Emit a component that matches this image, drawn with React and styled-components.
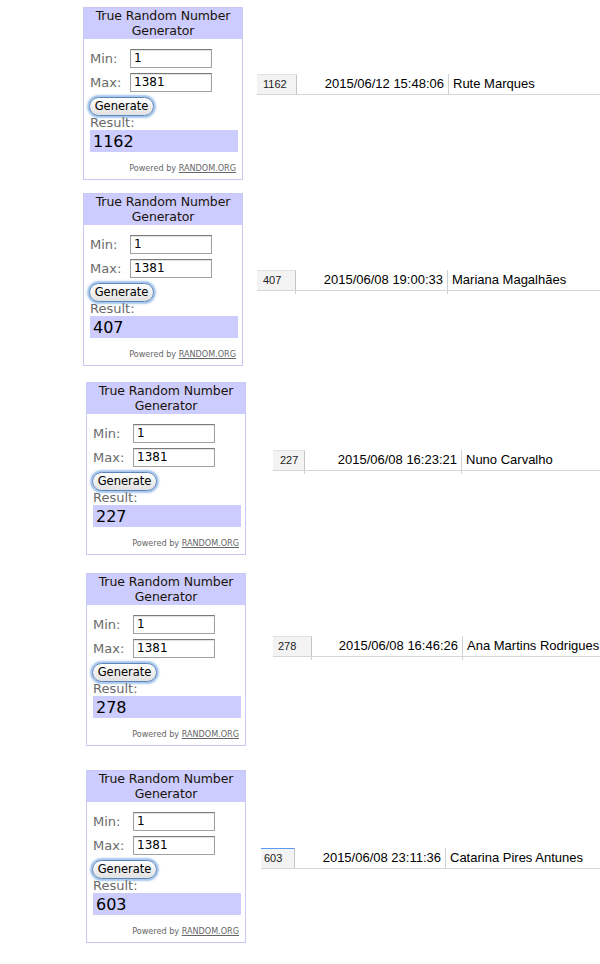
import React from "react"
import styled, { createGlobalStyle } from "styled-components"

const GlobalStyle = createGlobalStyle`
  body {
    margin: 0;
    background: #fff;
  }
`

const Page = styled.div`
  width: 600px;
  height: 964px;
  overflow: hidden;
  display: flex;
  flex-direction: column;
`

const Entry = styled.div`
  display: flex;
  align-items: flex-start;
  margin-top: ${p => p.top}px;
  padding-left: ${p => p.left}px;
`

// the random.org widget
const Widget = styled.div`
  width: 160px;
  height: 173px;
  box-sizing: border-box;
  overflow: hidden;
  border: 1px solid #c8c8f4;
  font-family: "DejaVu Sans", Verdana, sans-serif;
  background: #fff;
`

const WidgetTitle = styled.div`
  background: #ccccff;
  color: #1a1208;
  text-align: center;
  font-size: 12.5px;
  line-height: 15px;
  padding: 0 0 1px;
  height: 30px;
  letter-spacing: -0.1px;
`

const WidgetBody = styled.div`
  padding: 10px 4px 0 6px;
`

const Field = styled.div`
  display: flex;
  align-items: center;
  height: 19px;
  margin-bottom: 5px;
`

const Label = styled.span`
  width: 40px;
  color: #6a6a6a;
  font-size: 13px;
`

const Input = styled.div`
  width: 82px;
  height: 19px;
  box-sizing: border-box;
  border: 1px solid #a0a0a0;
  border-top-color: #7a7a7a;
  box-shadow: inset 0 1px 1px rgba(0, 0, 0, 0.12);
  font-size: 12px;
  line-height: 17px;
  padding-left: 3px;
  color: #000;
`

const Button = styled.div`
  width: 65px;
  height: 19px;
  box-sizing: border-box;
  margin-left: -1px;
  border-radius: 10px;
  border: 1px solid #5d86bd;
  box-shadow: 0 0 0 1.5px #a9c8ec, 0 0 2px 2px rgba(120, 170, 230, 0.5);
  background: linear-gradient(#ffffff, #eeeeee 55%, #e2e2e2);
  font-size: 11.5px;
  line-height: 17px;
  text-align: center;
  color: #000;
`

const ResultLabel = styled.div`
  color: #6a6a6a;
  font-size: 13px;
  line-height: 14px;
  height: 14px;
`

const ResultBox = styled.div`
  background: #ccccff;
  height: 22px;
  width: 148px;
  box-sizing: border-box;
  padding-left: 3px;
  font-size: 16px;
  line-height: 23px;
  color: #000;
`

const Powered = styled.div`
  margin-top: 9px;
  text-align: right;
  font-size: 8.1px;
  line-height: 14px;
  color: #666;
  padding-right: 2px;

  span {
    text-decoration: underline;
  }
`

// the spreadsheet row beside it
const Sheet = styled.div`
  flex: 1;
  margin-left: ${p => p.gap}px;
  margin-top: ${p => p.offset}px;
  font-family: "Liberation Sans", Arial, sans-serif;
`

const SheetRow = styled.div`
  display: flex;
  height: 20px;
  border-bottom: 1px solid #d6d6d6;
`

const RowHead = styled.div`
  width: ${p => p.w}px;
  box-sizing: border-box;
  background: #f3f3f3;
  border-right: 1px solid #c4c4c4;
  border-top: 1px solid ${p => (p.selected ? "#5a9bf0" : "#e2e2e2")};
  padding-left: ${p => p.pad}px;
  font-size: 11px;
  line-height: 19px;
  color: #222;
`

const DateCell = styled.div`
  width: ${p => p.w}px;
  box-sizing: border-box;
  border-right: 1px solid #d0d0d0;
  text-align: right;
  padding-right: 4px;
  font-size: 13px;
  line-height: 20px;
  color: #000;
`

const NameCell = styled.div`
  flex: 1;
  padding-left: 4px;
  font-size: 13px;
  line-height: 20px;
  color: #000;
  white-space: nowrap;
`

const Stub = styled.div`
  display: flex;
  height: 3px;
`

const StubCell = styled.div`
  width: ${p => p.w}px;
  box-sizing: border-box;
  border-right: 1px solid #d0d0d0;
`

const entries = [
  { top: 7, left: 83, result: "1162", gap: 14, offset: 67, head: 40, pad: 6, date: 152, when: "2015/06/12 15:48:06", name: "Rute Marques" },
  { top: 13, left: 83, result: "407", gap: 14, offset: 77, head: 39, pad: 6, date: 152, when: "2015/06/08 19:00:33", name: "Mariana Magalhães", stub: true },
  { top: 16, left: 86, result: "227", gap: 27, offset: 68, head: 32, pad: 7, date: 157, when: "2015/06/08 16:23:21", name: "Nuno Carvalho", stub: true },
  { top: 18, left: 86, result: "278", gap: 27, offset: 63, head: 39, pad: 5, date: 151, when: "2015/06/08 16:46:26", name: "Ana Martins Rodrigues", stub: true },
  { top: 24, left: 86, result: "603", gap: 15, offset: 78, head: 34, pad: 3, date: 151, when: "2015/06/08 23:11:36", name: "Catarina Pires Antunes", selected: true },
]

const RandomWidget = ({ result }) => (
  <Widget>
    <WidgetTitle>
      True Random Number
      <br />
      Generator
    </WidgetTitle>
    <WidgetBody>
      <Field>
        <Label>Min:</Label>
        <Input>1</Input>
      </Field>
      <Field>
        <Label>Max:</Label>
        <Input>1381</Input>
      </Field>
      <Button>Generate</Button>
      <ResultLabel>Result:</ResultLabel>
      <ResultBox>{result}</ResultBox>
      <Powered>
        Powered by <span>RANDOM.ORG</span>
      </Powered>
    </WidgetBody>
  </Widget>
)

const App = () => (
  <Page>
    <GlobalStyle />
    {entries.map(e => (
      <Entry key={e.result} top={e.top} left={e.left}>
        <RandomWidget result={e.result} />
        <Sheet gap={e.gap} offset={e.offset}>
          <SheetRow>
            <RowHead w={e.head} pad={e.pad} selected={e.selected}>
              {e.result}
            </RowHead>
            <DateCell w={e.date}>{e.when}</DateCell>
            <NameCell>{e.name}</NameCell>
          </SheetRow>
          {e.stub && (
            <Stub>
              <StubCell w={e.head} />
              <StubCell w={e.date} />
            </Stub>
          )}
        </Sheet>
      </Entry>
    ))}
  </Page>
)

export default App
